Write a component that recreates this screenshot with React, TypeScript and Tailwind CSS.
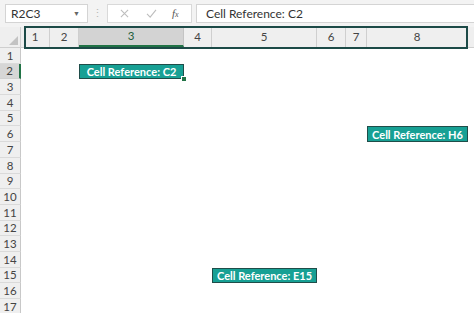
import React from "react";

const cols = ["1", "2", "3", "4", "5", "6", "7", "8"];
const rows = Array.from({ length: 17 }, (_, i) => i + 1);

const font = { fontFamily: "Lato, 'Liberation Sans', sans-serif" };

function Label({ text, pos, handle }: { text: string; pos: string; handle?: boolean }) {
  return (
    <div className={`${pos} relative flex items-center justify-center bg-[#17a094] border border-[#1f4d49] text-white font-bold text-[11px] leading-none`}>
      {text}
      {handle && (
        <div className="absolute right-[-4px] bottom-[-4px] w-[6px] h-[6px] bg-[#217346] border border-white" />
      )}
    </div>
  );
}

export default function App() {
  return (
    <div className="w-[474px] h-[313px] overflow-hidden bg-white relative text-[#444]" style={font}>
      {/* Formula bar */}
      <div className="h-[27px] bg-[#f3f3f3] flex items-start pt-[4px]">
        <div className="ml-[5px] w-[83px] h-[19px] bg-white border border-[#d4d4d4] flex items-center justify-between pl-[5px] pr-[7px] text-[12px] text-[#333]">
          <span>R2C3</span>
          <span className="text-[7px] text-[#666]">▼</span>
        </div>
        <div className="w-[19px] h-[19px] flex items-center justify-center text-[#b8b8b8] text-[11px]">⋮</div>
        <div className="w-[85px] h-[19px] bg-white border border-[#d9d9d9] flex items-center text-[#c4c4c4]">
          <svg width="9" height="9" viewBox="0 0 10 10" className="ml-[12px]">
            <path d="M1 1L9 9M9 1L1 9" stroke="#bdbdbd" strokeWidth="1.2" />
          </svg>
          <svg width="11" height="9" viewBox="0 0 12 10" className="ml-[17px]">
            <path d="M1 5.5L4.5 9L11 1" stroke="#bdbdbd" strokeWidth="1.2" fill="none" />
          </svg>
          <span className="ml-[15px] italic text-[11px] text-[#555]" style={{ fontFamily: "'Liberation Serif', serif" }}>
            f<span className="text-[8px]">x</span>
          </span>
        </div>
        <div className="ml-[4px] flex-1 h-[19px] bg-white border-y border-l border-[#d4d4d4] flex items-center pl-[9px] text-[12px] text-[#333]">
          Cell Reference: C2
        </div>
      </div>

      {/* Sheet */}
      <div className="relative">
        <div className="grid grid-cols-[21px_29px_29px_105px_28px_105px_29px_21px_101px_1fr] grid-rows-[20px] bg-[#efefef] border-b border-[#cfcfcf]">
          <div className="relative border-r border-[#cfcfcf]">
            <div className="absolute left-[9px] top-[9px] w-0 h-0 border-l-[9px] border-l-transparent border-b-[9px] border-b-[#c3c3c3]" />
          </div>
          {cols.map((c) => (
            <div
              key={c}
              className={
                c === "3"
                  ? "flex items-center justify-center text-[11.5px] bg-[#d3d3d3] border-b-2 border-[#217346] border-r border-r-[#c4c4c4] text-[#1e5e3a]"
                  : "flex items-center justify-center text-[11.5px] border-r border-[#cfcfcf]"
              }
            >
              {c}
            </div>
          ))}
          <div />
        </div>

        {/* header outline */}
        <div className="absolute left-[24px] top-[-1px] w-[444px] h-[23px] border-2 border-[#1c4a47] pointer-events-none" />

        <div className="grid grid-cols-[21px_29px_29px_105px_28px_105px_29px_21px_101px_1fr] auto-rows-[15.7px]">
          {rows.map((r) => (
            <div
              key={r}
              className={
                r === 2
                  ? "col-start-1 flex items-center justify-center text-[11.5px] bg-[#d6d6d6] border-b border-[#d0d0d0] border-r-2 border-r-[#217346] text-[#444]"
                  : "col-start-1 flex items-center justify-center text-[11.5px] bg-[#efefef] border-b border-[#dadada] border-r border-r-[#c8c8c8]"
              }
              style={{ gridRowStart: r }}
            >
              {r}
            </div>
          ))}
          <Label text="Cell Reference: C2" pos="col-start-4 row-start-2" handle />
          <Label text="Cell Reference: H6" pos="col-start-9 row-start-6" />
          <Label text="Cell Reference: E15" pos="col-start-6 row-start-15" />
        </div>
      </div>
    </div>
  );
}
